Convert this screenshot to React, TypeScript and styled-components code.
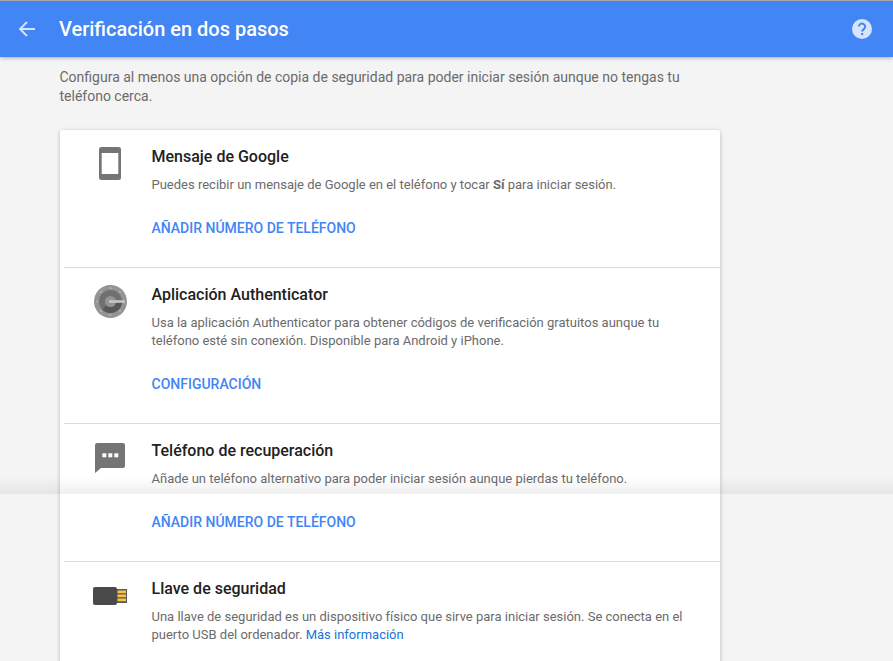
import React from 'react'
import styled, { createGlobalStyle } from 'styled-components'

const GlobalStyle = createGlobalStyle`
  html, body {
    margin: 0;
    padding: 0;
    height: 100%;
    overflow: hidden;
    background: #f4f4f4;
    font-family: Roboto, "Liberation Sans", sans-serif;
  }
`

const Page = styled.div`
  position: relative;
  width: 893px;
  height: 661px;
  overflow: hidden;
  background: #f4f4f4;
`

const Header = styled.header`
  display: flex;
  align-items: center;
  height: 56px;
  border-top: 1px solid #a9a9a9;
  background: #4285f4;
  box-shadow: 0 1px 4px rgba(0, 0, 0, 0.3);
  padding: 0 21px 0 18px;
`

const BackButton = styled.div`
  display: flex;
  width: 18px;
  height: 18px;
  margin-right: 23px;
`

const Title = styled.h1`
  flex: 1;
  margin: 0;
  color: #fff;
  font-size: 20px;
  font-weight: 500;
  line-height: 56px;
`

const Content = styled.main`
  width: 660px;
  margin-left: 60px;
`

const Intro = styled.p`
  margin: 10.6px 0 23.6px -0.5px;
  color: #6b6b6b;
  font-size: 14px;
  line-height: 19.4px;
`

const Card = styled.section`
  background: #fff;
  border-radius: 2px;
  box-shadow: 0 1px 4px rgba(0, 0, 0, 0.25);
`

const Row = styled.article<{ $height: number }>`
  display: flex;
  height: ${({ $height }) => $height}px;
  box-sizing: border-box;
  margin-left: 4px;
  border-bottom: 1px solid #dcdcdc;

  &:last-child {
    border-bottom: 0;
  }
`

const IconCell = styled.div`
  display: flex;
  justify-content: center;
  box-sizing: border-box;
  width: 87.5px;
  padding: 17px 0 0 4.5px;
`

const Body = styled.div`
  flex: 1;
  padding: 17px 20px 0 0;
`

const RowTitle = styled.h2`
  margin: 0 0 9px;
  color: #212121;
  font-size: 16px;
  font-weight: 500;
  line-height: 20px;
`

const Description = styled.p`
  margin: 0;
  color: #6b6b6b;
  font-size: 13px;
  line-height: 18px;

  b {
    font-weight: 700;
  }
`

const Action = styled.div`
  margin-top: 25px;
  color: #4285f4;
  font-size: 14px;
  font-weight: 500;
  line-height: 18px;
`

const InlineLink = styled.span`
  color: #1a73d8;
`

const FooterFade = styled.div`
  position: absolute;
  left: 0;
  right: 0;
  top: 477px;
  height: 16px;
  background: linear-gradient(to bottom, rgba(0, 0, 0, 0), rgba(0, 0, 0, 0.06));
  border-bottom: 1px solid rgba(0, 0, 0, 0.05);
  pointer-events: none;
`

const IconSvg = styled.svg<{ $top?: number }>`
  display: block;
  margin-top: ${({ $top }) => $top ?? 0}px;
`

const PhoneIcon = () => (
  <IconSvg width="22" height="33" viewBox="0 0 22 33">
    <rect width="22" height="33" rx="2.5" fill="#757575" />
    <rect x="2.7" y="6" width="16.6" height="21" fill="#fff" />
  </IconSvg>
)

const AuthenticatorIcon = () => (
  <IconSvg width="33" height="33" viewBox="0 0 33 33">
    <circle cx="16.5" cy="16.5" r="16.5" fill="#949494" />
    <circle cx="16.5" cy="16.5" r="11.5" fill="#707070" />
    <path d="M16.5 16.5 L28 16.5 A11.5 11.5 0 0 1 8.4 24.6 Z" fill="#585858" />
    <circle cx="16.5" cy="16.5" r="5.6" fill="#949494" />
    <rect x="15" y="15.2" width="16" height="2.6" fill="#c6c6c6" />
    <circle cx="16.5" cy="3" r="1" fill="#b5b5b5" />
    <circle cx="16.5" cy="30" r="1" fill="#b5b5b5" />
    <circle cx="3" cy="16.5" r="1" fill="#b5b5b5" />
    <circle cx="7" cy="7" r="1" fill="#b5b5b5" />
    <circle cx="7" cy="26" r="1" fill="#b5b5b5" />
    <circle cx="26" cy="7" r="1" fill="#b5b5b5" />
    <circle cx="26" cy="26" r="1" fill="#b5b5b5" />
  </IconSvg>
)

const ChatIcon = () => (
  <IconSvg $top={2} width="30" height="30" viewBox="0 0 30 30">
    <path d="M2 0 H28 A2 2 0 0 1 30 2 V23 A2 2 0 0 1 28 25 H6 L0 30 V2 A2 2 0 0 1 2 0 Z" fill="#757575" />
    <rect x="7.3" y="10.3" width="4" height="4" fill="#fff" />
    <rect x="13.3" y="10.3" width="4" height="4" fill="#fff" />
    <rect x="19.3" y="10.3" width="4" height="4" fill="#fff" />
  </IconSvg>
)

const KeyIcon = () => (
  <IconSvg $top={8} width="34" height="18" viewBox="0 0 34 18">
    <rect x="0" y="0" width="24" height="18" rx="2" fill="#4a4a4a" />
    <rect x="24" y="2" width="10" height="14" fill="#5a5a5a" />
    <rect x="24.5" y="3.5" width="8.5" height="2.7" fill="#f5c242" />
    <rect x="24.5" y="7.5" width="8.5" height="2.7" fill="#f5c242" />
    <rect x="24.5" y="11.5" width="8.5" height="2.7" fill="#f5c242" />
  </IconSvg>
)

const App: React.FC = () => (
  <Page>
    <GlobalStyle />
    <Header>
      <BackButton>
        <svg width="18" height="18" viewBox="0 0 18 18" fill="none" stroke="#d6e4fd" strokeWidth="1.8">
          <path d="M17 9 H2 M9 2 L2 9 L9 16" />
        </svg>
      </BackButton>
      <Title>Verificación en dos pasos</Title>
      <svg width="20" height="20" viewBox="0 0 20 20">
        <circle cx="10" cy="10" r="10" fill="#d6e4fd" />
        <path d="M6.9 7.6 A3.1 3.1 0 1 1 12 10 C10.8 10.9 10.2 11.3 10.2 12.6" fill="none" stroke="#4285f4" strokeWidth="2" />
        <rect x="9.1" y="14" width="2.1" height="2.1" fill="#4285f4" />
      </svg>
    </Header>
    <Content>
      <Intro>
        Configura al menos una opción de copia de seguridad para poder iniciar sesión aunque no tengas tu
        teléfono cerca.
      </Intro>
      <Card>
        <Row $height={138}>
          <IconCell><PhoneIcon /></IconCell>
          <Body>
            <RowTitle>Mensaje de Google</RowTitle>
            <Description>
              Puedes recibir un mensaje de Google en el teléfono y tocar <b>Sí</b> para iniciar sesión.
            </Description>
            <Action>AÑADIR NÚMERO DE TELÉFONO</Action>
          </Body>
        </Row>
        <Row $height={156}>
          <IconCell><AuthenticatorIcon /></IconCell>
          <Body>
            <RowTitle>Aplicación Authenticator</RowTitle>
            <Description>
              Usa la aplicación Authenticator para obtener códigos de verificación gratuitos aunque tu
              teléfono esté sin conexión. Disponible para Android y iPhone.
            </Description>
            <Action>CONFIGURACIÓN</Action>
          </Body>
        </Row>
        <Row $height={138}>
          <IconCell><ChatIcon /></IconCell>
          <Body>
            <RowTitle>Teléfono de recuperación</RowTitle>
            <Description>
              Añade un teléfono alternativo para poder iniciar sesión aunque pierdas tu teléfono.
            </Description>
            <Action>AÑADIR NÚMERO DE TELÉFONO</Action>
          </Body>
        </Row>
        <Row $height={138}>
          <IconCell><KeyIcon /></IconCell>
          <Body>
            <RowTitle>Llave de seguridad</RowTitle>
            <Description>
              Una llave de seguridad es un dispositivo físico que sirve para iniciar sesión. Se conecta en el
              puerto USB del ordenador. <InlineLink>Más información</InlineLink>
            </Description>
          </Body>
        </Row>
      </Card>
    </Content>
    <FooterFade />
  </Page>
)

export default App
